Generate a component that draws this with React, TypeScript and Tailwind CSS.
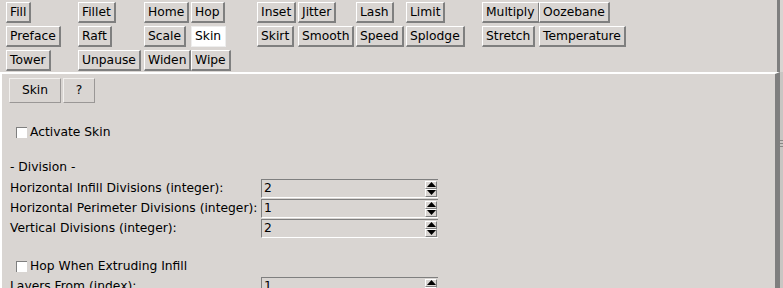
import React from 'react';

const rows = [
  ['Fill', 'Fillet', 'Home', 'Hop', 'Inset', 'Jitter', 'Lash', 'Limit', 'Multiply', 'Oozebane'],
  ['Preface', 'Raft', 'Scale', 'Skin', 'Skirt', 'Smooth', 'Speed', 'Splodge', 'Stretch', 'Temperature'],
  ['Tower', 'Unpause', 'Widen', 'Wipe'],
];

function ToolButton({ label }: { label: string }) {
  if (label === 'Skin') {
    return (
      <div className="h-[21px] border border-[#eeeeee] bg-white pl-[3px] pr-[4px] pt-[1px] leading-[16px]">{label}</div>
    );
  }
  return (
    <div className="h-[21px] border-l border-t border-l-white border-t-white border-r-2 border-b-2 border-r-[#7f7f7f] border-b-[#7f7f7f] bg-[#d9d5d2] pl-[3px] pr-[3px] pt-[1px] leading-[16px]">
      {label}
    </div>
  );
}

function Arrow({ up }: { up?: boolean }) {
  return (
    <div className="flex h-[8px] w-[12px] items-center justify-center border-l border-t border-l-white border-t-white border-r border-b border-r-[#7f7f7f] border-b-[#7f7f7f] bg-[#d9d5d2]">
      <svg width="9" height="5" viewBox="0 0 9 5">
        {up ? <path d="M0 5 L4.5 0 L9 5 Z" fill="#000" /> : <path d="M0 0 L9 0 L4.5 5 Z" fill="#000" />}
      </svg>
    </div>
  );
}

function Spin({ value }: { value: string }) {
  return (
    <div className="flex h-[19px] w-[177px] border-l border-t border-b border-l-[#7f7f7f] border-t-[#7f7f7f] border-b-white">
      <div className="flex-1 pl-[2px] leading-[17px]">{value}</div>
      <div className="flex flex-col pr-[1px] pt-[1px]">
        <Arrow up />
        <Arrow />
      </div>
    </div>
  );
}

function Check({ label }: { label: string }) {
  return (
    <div className="flex h-[16px] items-center pl-[14px]">
      <div className="h-[11px] w-[11px] border-l border-t border-[#7f7f7f] bg-white" />
      <span className="ml-[3px] leading-[16px]">{label}</span>
    </div>
  );
}

function Row({ label, value }: { label: string; value: string }) {
  return (
    <div className="grid h-[20px] grid-cols-[251px_177px] items-center pl-[8px]">
      <span className="whitespace-nowrap leading-[16px]">{label}</span>
      <Spin value={value} />
    </div>
  );
}

export default function App() {
  return (
    <div className="h-[288px] w-[783px] overflow-hidden bg-[#d9d5d2] text-[12.3px] text-black" style={{ fontFamily: '"DejaVu Sans", sans-serif' }}>
      <div className="flex h-[72px]">
        <div className="flex-1 border-r-[3px] border-r-[#7f7f7f] pl-[6px] pt-[2px]">
          <div className="grid grid-cols-[72px_66px_47px_66px_41px_58px_50px_76px_57px_auto] gap-y-[3px] justify-items-start">
            {rows.flat().map((l) => (
              <ToolButton key={l} label={l} />
            ))}
          </div>
        </div>
        <div className="w-[3px]" />
      </div>
      <div className="flex h-[216px]">
        <div className="flex-1 border-l-2 border-t-2 border-l-white border-t-white border-r-[5px] border-r-[#7f7f7f]">
          <div className="ml-[7px] mt-[4px] flex gap-[2px]">
            <div className="flex h-[25px] w-[52px] items-center justify-center border border-l-[#f2f0ee] border-t-[#f2f0ee] border-r-[#9a9796] border-b-[#9a9796]">Skin</div>
            <div className="flex h-[25px] w-[32px] items-center justify-center border border-l-[#f2f0ee] border-t-[#f2f0ee] border-r-[#9a9796] border-b-[#9a9796]">?</div>
          </div>
          <div className="mt-[21px]">
            <Check label="Activate Skin" />
          </div>
          <div className="mt-[19px] pl-[8px] leading-[16px]">- Division -</div>
          <div className="mt-[3px]">
            <Row label="Horizontal Infill Divisions (integer):" value="2" />
            <Row label="Horizontal Perimeter Divisions (integer):" value="1" />
            <Row label="Vertical Divisions (integer):" value="2" />
          </div>
          <div className="mt-[20px]">
            <Check label="Hop When Extruding Infill" />
          </div>
          <div className="mt-[2px]">
            <Row label="Layers From (index):" value="1" />
          </div>
        </div>
        <div className="relative w-[3px] bg-[#c9c6c3]">
          <div className="absolute left-0 top-[68px] flex flex-col gap-[2px]">
            <div className="h-px w-[3px] bg-[#8a8886]" />
            <div className="h-px w-[3px] bg-[#8a8886]" />
            <div className="h-px w-[3px] bg-[#8a8886]" />
          </div>
        </div>
      </div>
    </div>
  );
}
